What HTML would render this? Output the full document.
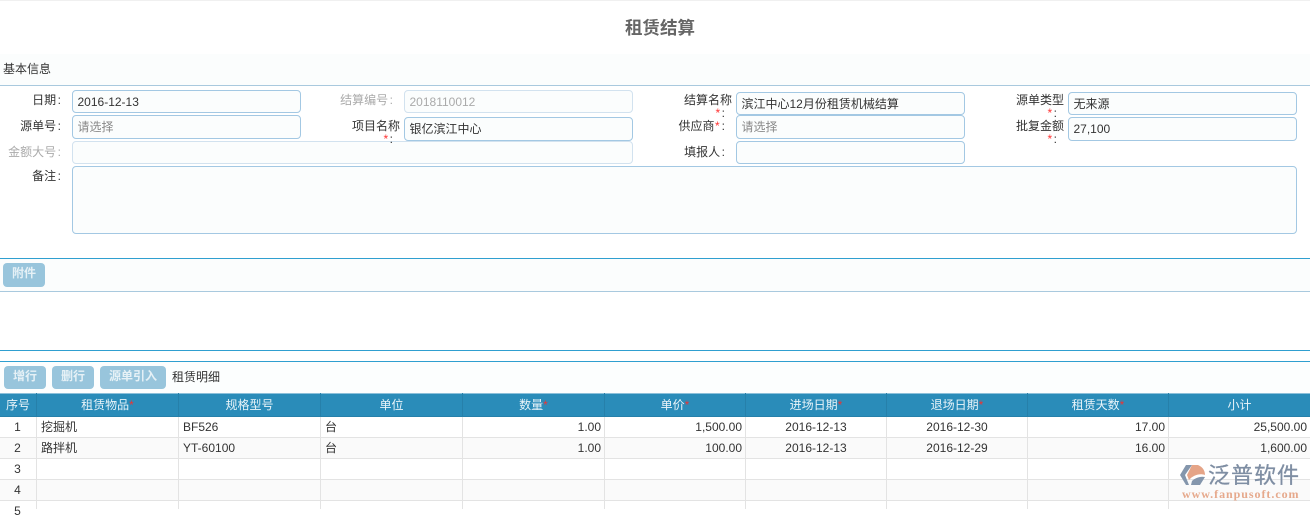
<!DOCTYPE html>
<html lang="zh"><head><meta charset="utf-8"><title>租赁结算</title>
<style>
*{box-sizing:border-box}
html,body{margin:0;padding:0}
body{width:1310px;height:509px;overflow:hidden;background:#fff;position:relative;font:12px/16px "Liberation Sans","Noto Sans CJK SC",sans-serif;color:#333}
.a{position:absolute}
.in{position:absolute;width:229px;border:1px solid #a3c8e3;border-radius:4px;background:#fbfdfd;padding:0 4.5px;color:#333;white-space:nowrap;display:flex;align-items:center}
.dis{border-color:#d2e2ef;color:#aaa}
.ph{color:#888}
.l{position:absolute;text-align:right;white-space:nowrap;color:#333}
.l.g{color:#aaa}
.l b{font-weight:normal;padding-left:1.5px}
.w{width:60px;line-height:13px}
.w span{display:block;padding-right:7px;line-height:12px}
i{font-style:normal;color:#f33}
.b{position:absolute;background:#98c5dc;color:#e6f1f6;border-radius:4px;text-align:center;font-weight:bold}
.r{position:absolute;height:1px;left:0;width:1310px;background:#e3e3e3}
.v{position:absolute;width:1px;top:417px;height:92px;background:#e3e3e3}
.hv{position:absolute;width:1px;top:393px;height:24px;background:#2680aa}
.h{position:absolute;top:396px;height:18px;line-height:18px;color:#e9f4f9;text-align:center}
.h i{color:#e33}
.c{position:absolute;height:20px;line-height:20px;white-space:nowrap;color:#333}
.ri{text-align:right}.ce{text-align:center}
</style></head><body>
<div class="a" style="left:0;top:0;width:1310px;height:1px;background:#f0f0f0"></div>
<div class="a" style="left:0;top:15px;width:1310px;text-align:center;font-size:17.5px;line-height:26px;font-weight:bold;color:#666;padding-left:10px">租赁结算</div>

<div class="a" style="left:0;top:54px;width:1310px;height:32px;background:#fbfdfd;border-bottom:1px solid #a9c9de"></div>
<div class="a" style="left:3px;top:61px;color:#333">基本信息</div>

<div class="l" style="left:0;width:61px;top:92px">日期<b>:</b></div>
<div class="in" style="left:72px;top:90px;height:23px">2016-12-13</div>
<div class="l" style="left:0;width:61px;top:118px">源单号<b>:</b></div>
<div class="in ph" style="left:72px;top:115px;height:24px">请选择</div>
<div class="l g" style="left:0;width:61px;top:144px">金额大号<b>:</b></div>
<div class="in dis" style="left:72px;top:141px;height:23px;width:561px"></div>
<div class="l" style="left:0;width:61px;top:168px">备注<b>:</b></div>
<div class="in" style="left:72px;top:166px;height:68px;width:1225px"></div>

<div class="l g" style="left:330px;width:63px;top:92px">结算编号<b>:</b></div>
<div class="in dis" style="left:404px;top:90px;height:23px">2018110012</div>
<div class="l w" style="left:340px;top:120px">项目名称<span><i>*</i><b>:</b></span></div>
<div class="in" style="left:404px;top:117px;height:24px">银亿滨江中心</div>

<div class="l w" style="left:672px;top:94px">结算名称<span><i>*</i><b>:</b></span></div>
<div class="in" style="left:736px;top:92px;height:23px">滨江中心12月份租赁机械结算</div>
<div class="l" style="left:660px;width:65px;top:118px">供应商<i style="padding:0 .5px">*</i><b>:</b></div>
<div class="in ph" style="left:736px;top:115px;height:24px">请选择</div>
<div class="l" style="left:660px;width:65px;top:144px">填报人<b>:</b></div>
<div class="in" style="left:736px;top:141px;height:23px"></div>

<div class="l w" style="left:1004px;top:94px">源单类型<span><i>*</i><b>:</b></span></div>
<div class="in" style="left:1068px;top:92px;height:23px">无来源</div>
<div class="l w" style="left:1004px;top:120px">批复金额<span><i>*</i><b>:</b></span></div>
<div class="in" style="left:1068px;top:117px;height:24px">27,100</div>

<div class="a" style="left:0;top:258px;width:1310px;height:34px;background:#fbfdfd;border-top:1px solid #2f9fd0;border-bottom:1px solid #a9c9de"></div>
<div class="b" style="left:3px;top:263px;width:42px;height:24px;line-height:21px">附件</div>

<div class="a" style="left:0;top:350px;width:1310px;height:1px;background:#2f9fd0"></div>
<div class="a" style="left:0;top:361px;width:1310px;height:32px;background:#fcfefe;border-top:1px solid #2f9fd0"></div>
<div class="b" style="left:4px;top:366px;width:42px;height:23px;line-height:20px">增行</div>
<div class="b" style="left:52px;top:366px;width:42px;height:23px;line-height:20px">删行</div>
<div class="b" style="left:100px;top:366px;width:66px;height:23px;line-height:20px">源单引入</div>
<div class="a" style="left:172px;top:369px;color:#333">租赁明细</div>

<div class="a" style="left:0;top:393px;width:1310px;height:24px;background:#2a8cb9;border-top:1px solid #8cc0da;border-bottom:1px solid #2680aa"></div>
<div class="hv" style="left:36px"></div><div class="hv" style="left:178px"></div><div class="hv" style="left:320px"></div><div class="hv" style="left:462px"></div><div class="hv" style="left:604px"></div><div class="hv" style="left:745px"></div><div class="hv" style="left:886px"></div><div class="hv" style="left:1027px"></div><div class="hv" style="left:1168px"></div>
<div class="h" style="left:0;width:36px">序号</div>
<div class="h" style="left:37px;width:141px">租赁物品<i>*</i></div>
<div class="h" style="left:179px;width:141px">规格型号</div>
<div class="h" style="left:321px;width:141px">单位</div>
<div class="h" style="left:463px;width:141px">数量<i>*</i></div>
<div class="h" style="left:605px;width:140px">单价<i>*</i></div>
<div class="h" style="left:746px;width:140px">进场日期<i>*</i></div>
<div class="h" style="left:887px;width:140px">退场日期<i>*</i></div>
<div class="h" style="left:1028px;width:140px">租赁天数<i>*</i></div>
<div class="h" style="left:1169px;width:141px">小计</div>

<div class="a" style="left:0;top:438px;width:1310px;height:20px;background:#fafafa"></div>
<div class="a" style="left:0;top:480px;width:1310px;height:20px;background:#fafafa"></div>
<div class="r" style="top:437px"></div><div class="r" style="top:458px"></div><div class="r" style="top:479px"></div><div class="r" style="top:500px"></div>
<div class="v" style="left:36px"></div><div class="v" style="left:178px"></div><div class="v" style="left:320px"></div><div class="v" style="left:462px"></div><div class="v" style="left:604px"></div><div class="v" style="left:745px"></div><div class="v" style="left:886px"></div><div class="v" style="left:1027px"></div><div class="v" style="left:1168px"></div>

<div class="c ce" style="left:0;width:35px;top:417px">1</div>
<div class="c" style="left:41px;top:417px">挖掘机</div>
<div class="c" style="left:183px;top:417px">BF526</div>
<div class="c" style="left:325px;top:417px">台</div>
<div class="c ri" style="left:463px;width:138px;top:417px">1.00</div>
<div class="c ri" style="left:605px;width:137px;top:417px">1,500.00</div>
<div class="c ce" style="left:746px;width:140px;top:417px">2016-12-13</div>
<div class="c ce" style="left:887px;width:140px;top:417px">2016-12-30</div>
<div class="c ri" style="left:1028px;width:137px;top:417px">17.00</div>
<div class="c ri" style="left:1169px;width:138px;top:417px">25,500.00</div>

<div class="c ce" style="left:0;width:35px;top:438px">2</div>
<div class="c" style="left:41px;top:438px">路拌机</div>
<div class="c" style="left:183px;top:438px">YT-60100</div>
<div class="c" style="left:325px;top:438px">台</div>
<div class="c ri" style="left:463px;width:138px;top:438px">1.00</div>
<div class="c ri" style="left:605px;width:137px;top:438px">100.00</div>
<div class="c ce" style="left:746px;width:140px;top:438px">2016-12-13</div>
<div class="c ce" style="left:887px;width:140px;top:438px">2016-12-29</div>
<div class="c ri" style="left:1028px;width:137px;top:438px">16.00</div>
<div class="c ri" style="left:1169px;width:138px;top:438px">1,600.00</div>

<div class="c ce" style="left:0;width:35px;top:459px">3</div>
<div class="c ce" style="left:0;width:35px;top:480px">4</div>
<div class="c ce" style="left:0;width:35px;top:501px">5</div>

<svg class="a" style="left:1180px;top:465px" width="26" height="21" viewBox="0 0 26 21">
<path d="M6 0H12L5 10L9 20H6L0 10Z" fill="#8496ac"/>
<path d="M12 0H18C23 2 25 6 25 10C20 8 13 10 9 15L7 10Z" fill="#e5a487"/>
<path d="M11 20H20L25 12C20 11 15 13 12 16Z" fill="#8496ac"/>
</svg>
<div class="a" style="left:1208px;top:462px;font-size:22px;line-height:28px;color:#7f8ea3;letter-spacing:1px;white-space:nowrap;-webkit-text-stroke:.3px #7f8ea3">泛普软件</div>
<div class="a" style="left:1182px;top:487px;font:bold 12px/14px 'Liberation Serif',serif;color:#e6a98c;letter-spacing:.95px;white-space:nowrap">www.fanpusoft.com</div>
</body></html>
